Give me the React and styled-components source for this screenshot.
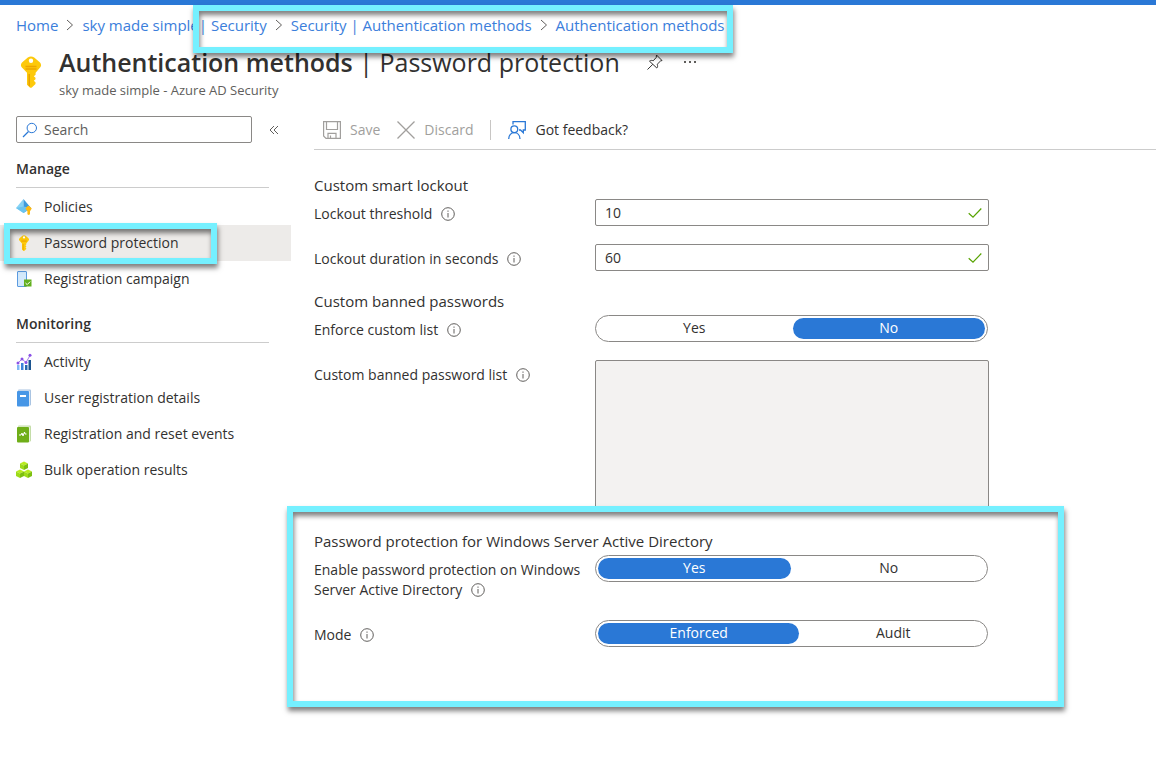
import { useState } from "react";
import styled, { createGlobalStyle, css } from "styled-components";

const c = {
  blue: "#2a78d6",
  link: "#3b7edb",
  text: "#323130",
  muted: "#605e5c",
  disabled: "#a19f9d",
  border: "#8a8886",
  line: "#cccccc",
  mark: "#75f0ff",
};

const manage = [
  { label: "Policies", icon: <PoliciesIcon /> },
  { label: "Password protection", icon: <KeyIcon size={16} />, active: true },
  { label: "Registration campaign", icon: <CampaignIcon /> },
];

const monitoring = [
  { label: "Activity", icon: <ActivityIcon /> },
  { label: "User registration details", icon: <BookIcon /> },
  { label: "Registration and reset events", icon: <BookIcon green /> },
  { label: "Bulk operation results", icon: <CubesIcon /> },
];

export default function App() {
  const [threshold, setThreshold] = useState("10");
  const [duration, setDuration] = useState("60");
  const [customList, setCustomList] = useState("No");
  const [enabled, setEnabled] = useState("Yes");
  const [mode, setMode] = useState("Enforced");

  return (
    <>
      <GlobalStyle />
      <TopBar />
      <Breadcrumb aria-label="Breadcrumb">
        <a href="#home">Home</a>
        <Chevron />
        <a href="#tenant">sky made simple</a>
        <Marked>
          <a href="#security">| Security</a>
          <Chevron />
          <a href="#security-methods">Security | Authentication methods</a>
          <Chevron />
          <a href="#methods">Authentication methods</a>
          <Highlight $inset="-9px -8px -17px -6px" />
        </Marked>
      </Breadcrumb>

      <Header>
        <KeyIcon size={32} />
        <div>
          <TitleRow>
            <Title>
              <strong>Authentication methods</strong> | Password protection
            </Title>
            <IconButton aria-label="Pin to dashboard">
              <PinIcon />
            </IconButton>
            <IconButton aria-label="More">
              <MoreIcon />
            </IconButton>
          </TitleRow>
          <Subtitle>sky made simple - Azure AD Security</Subtitle>
        </div>
      </Header>

      <Body>
        <Sidebar>
          <SearchRow>
            <SearchBox>
              <SearchIcon />
              <input type="search" placeholder="Search" aria-label="Search" />
            </SearchBox>
            <IconButton aria-label="Collapse menu">
              <CollapseIcon />
            </IconButton>
          </SearchRow>
          <NavGroup title="Manage" items={manage} />
          <NavGroup title="Monitoring" items={monitoring} />
        </Sidebar>

        <Main>
          <Toolbar>
            <Command disabled>
              <SaveIcon />
              Save
            </Command>
            <Command disabled>
              <DiscardIcon />
              Discard
            </Command>
            <Separator />
            <Command>
              <FeedbackIcon />
              Got feedback?
            </Command>
          </Toolbar>

          <Section>
            <SectionTitle>Custom smart lockout</SectionTitle>
            <Row>
              <Label htmlFor="threshold">
                Lockout threshold <InfoIcon />
              </Label>
              <Field>
                <input
                  id="threshold"
                  value={threshold}
                  onChange={(e) => setThreshold(e.target.value)}
                />
                <CheckIcon />
              </Field>
            </Row>
            <Row>
              <Label htmlFor="duration">
                Lockout duration in seconds <InfoIcon />
              </Label>
              <Field>
                <input
                  id="duration"
                  value={duration}
                  onChange={(e) => setDuration(e.target.value)}
                />
                <CheckIcon />
              </Field>
            </Row>
          </Section>

          <Section>
            <SectionTitle>Custom banned passwords</SectionTitle>
            <Row>
              <Label as="span" id="custom-list">
                Enforce custom list <InfoIcon />
              </Label>
              <Toggle
                labelledBy="custom-list"
                options={["Yes", "No"]}
                value={customList}
                onChange={setCustomList}
              />
            </Row>
            <Row>
              <Label htmlFor="banned">
                Custom banned password list <InfoIcon />
              </Label>
              <TextArea id="banned" disabled={customList === "No"} />
            </Row>
          </Section>

          <Section>
            <SectionTitle>Password protection for Windows Server Active Directory</SectionTitle>
            <Row>
              <Label as="span" id="enable">
                Enable password protection on Windows Server Active Directory <InfoIcon />
              </Label>
              <Toggle
                labelledBy="enable"
                options={["Yes", "No"]}
                value={enabled}
                onChange={setEnabled}
              />
            </Row>
            <Row>
              <Label as="span" id="mode">
                Mode <InfoIcon />
              </Label>
              <Toggle
                labelledBy="mode"
                options={["Enforced", "Audit"]}
                value={mode}
                onChange={setMode}
                columns="203fr 185fr"
              />
            </Row>
            <Highlight $inset="-25px -75px -60px -27px" />
          </Section>
        </Main>
      </Body>
    </>
  );
}

function NavGroup({ title, items }) {
  return (
    <Group>
      <GroupTitle>{title}</GroupTitle>
      <NavList>
        {items.map(({ label, icon, active }) => (
          <li key={label}>
            <NavLink href="#item" $active={active} aria-current={active ? "page" : undefined}>
              {icon}
              {label}
              {active && <Highlight $inset="-2px 74px -3px 4px" />}
            </NavLink>
          </li>
        ))}
      </NavList>
    </Group>
  );
}

function Toggle({ options, value, onChange, labelledBy, columns = "1fr 1fr" }) {
  return (
    <ToggleBox role="radiogroup" aria-labelledby={labelledBy} $columns={columns}>
      {options.map((option) => (
        <Option key={option}>
          <input
            type="radio"
            name={labelledBy}
            checked={value === option}
            onChange={() => onChange(option)}
          />
          <span>{option}</span>
        </Option>
      ))}
    </ToggleBox>
  );
}

/* icons */

function Chevron() {
  return (
    <svg width="8" height="12" viewBox="0 0 8 12" fill="none" stroke="#605e5c" aria-hidden="true">
      <path d="M1 1l5.5 5L1 11" />
    </svg>
  );
}

function KeyIcon({ size }) {
  return (
    <svg width={size} height={size} viewBox="0 0 32 32" aria-hidden="true">
      <path
        d="M12.800 1.400Q16-.6 19.200 1.400L25 6.600Q27 9 25.300 11.200L20.600 16.800V18.800L18.800 20.300L20.500 21.800V23.300L18.800 24.800L20.500 26.300V28L16.800 31.500Q15.800 32.200 14.800 31.500L12 28.800V16.800L6.700 11.200Q5 9 7 6.600Z"
        fill="#fdc90b"
      />
      <path d="M13.500 18v11.500l1.500 1.300V18z" fill="#e8a200" />
      <path d="M10.500 10.500h11M10.500 13h11" stroke="#eda500" strokeWidth="1.400" />
      <circle cx="16" cy="4.800" r="2.200" fill="#fff" />
    </svg>
  );
}

function PinIcon() {
  return (
    <svg width="18" height="18" viewBox="0 0 18 18" fill="none" stroke="#323130" aria-hidden="true">
      <path d="M10.500 2l5.500 5.500-1.500.5-3.300 3.300c.7 1.600.5 2.700-.4 3.700L3.500 8.200c1.200-1 2.500-1 3.700-.4L10.200 4.500zM6.800 11.300L1.500 16.500" />
    </svg>
  );
}

function MoreIcon() {
  return (
    <svg width="16" height="18" viewBox="0 0 16 18" fill="#605e5c" aria-hidden="true">
      <rect x="2" y="8" width="2" height="2" />
      <rect x="7" y="8" width="2" height="2" />
      <rect x="12" y="8" width="2" height="2" />
    </svg>
  );
}

function SearchIcon() {
  return (
    <svg width="16" height="16" viewBox="0 0 16 16" fill="none" stroke="#2a78d6" aria-hidden="true">
      <circle cx="9.800" cy="6" r="4.700" />
      <path d="M6.500 9.500L1 15" strokeWidth="1.300" />
    </svg>
  );
}

function CollapseIcon() {
  return (
    <svg width="10" height="10" viewBox="0 0 10 10" fill="none" stroke="#605e5c" aria-hidden="true">
      <path d="M5 1L1 5l4 4M9 1L5 5l4 4" />
    </svg>
  );
}

function SaveIcon() {
  return (
    <svg width="18" height="18" viewBox="0 0 18 18" fill="none" stroke="currentColor" aria-hidden="true">
      <path d="M.6.600h16.800v16.800H3L.6 15zM3.500.600v7.900h11V.600M5 17.400v-5h8v5M7.500 14.500v3" strokeWidth="1.200" />
    </svg>
  );
}

function DiscardIcon() {
  return (
    <svg width="18" height="18" viewBox="0 0 18 18" stroke="currentColor" aria-hidden="true">
      <path d="M.5.500l17 17M17.500.500l-17 17" strokeWidth="1.300" />
    </svg>
  );
}

function FeedbackIcon() {
  return (
    <svg width="18" height="18" viewBox="0 0 18 18" fill="none" stroke="#2a78d6" strokeWidth="1.300" aria-hidden="true">
      <path d="M5 3.500V.700h12.300v8.300h-2v2.700L12.500 9H11" />
      <circle cx="6.300" cy="8.200" r="3.400" />
      <path d="M.7 18c0-4 2.500-6.300 5.600-6.300S12 14 12 18" />
    </svg>
  );
}

function InfoIcon() {
  return (
    <svg width="14" height="14" viewBox="0 0 14 14" fill="none" stroke="#605e5c" aria-hidden="true">
      <circle cx="7" cy="7" r="6.300" />
      <path d="M7 6v4.500M7 3.500v1.300" />
    </svg>
  );
}

function CheckIcon() {
  return (
    <svg width="14" height="12" viewBox="0 0 14 12" fill="none" stroke="#57a300" strokeWidth="1.200" aria-hidden="true">
      <path d="M.7 6.200L5 10.200 13.300 1.500" />
    </svg>
  );
}

function PoliciesIcon() {
  return (
    <svg width="16" height="16" viewBox="0 0 16 16" aria-hidden="true">
      <path d="M7.500 0L0 9l7.500 5z" fill="#86d3f5" />
      <path d="M7.500 0L15 9l-7.500 5z" fill="#3e9bdc" />
      <path d="M0 9l7.500-1.500L15 9l-7.500 5z" fill="#6cc4ee" />
      <path d="M11.800 7h1.400l2.600 2.400-1.800 2.800v3l-1.300.8-1.300-.8v-3L9.400 9.400z" fill="#fdb913" />
    </svg>
  );
}

function CampaignIcon() {
  return (
    <svg width="16" height="16" viewBox="0 0 16 16" aria-hidden="true">
      <rect x="1.500" y=".5" width="9" height="15" rx=".5" fill="#d3e9fb" stroke="#5b9be0" />
      <rect x="8" y="8.500" width="7.500" height="7" fill="#62b01e" />
      <path d="M9.500 12l1.700 1.600 3-3" fill="none" stroke="#fff" />
    </svg>
  );
}

function ActivityIcon() {
  return (
    <svg width="16" height="18" viewBox="0 0 16 18" aria-hidden="true">
      <path d="M1 12h2.500v5H1z" fill="#7fb8f5" />
      <path d="M5 10h2.500v7H5z" fill="#3c83d8" />
      <path d="M9 12h2.500v5H9z" fill="#2668b0" />
      <path d="M12.500 7H15v10h-2.500z" fill="#1c5590" />
      <path d="M2 10l4-4 4 3.500 4-7" fill="none" stroke="#a57ceb" />
      <g fill="#8a50e6">
        <circle cx="2" cy="10" r="1.500" />
        <circle cx="6" cy="6" r="1.500" />
        <circle cx="10" cy="9.500" r="1.500" />
        <circle cx="14" cy="2.300" r="1.500" />
      </g>
    </svg>
  );
}

function BookIcon({ green }) {
  return (
    <svg width="16" height="18" viewBox="0 0 16 18" aria-hidden="true">
      <rect x="2" y=".5" width="13" height="16" rx="1" fill={green ? "#c4dda8" : "#a9c4e2"} />
      <rect x="2" y="1.500" width="12" height="15" rx="1" fill={green ? "#e8f3da" : "#dbe8f6"} />
      <rect x="1" y="2" width="12" height="15.500" rx="1" fill={green ? "#6fae18" : "#4696e6"} />
      {green ? (
        <path d="M3 10h2l1-2 1 3 1.500-4L9 9h1.500" fill="none" stroke="#fff" />
      ) : (
        <path d="M4 6h6v2H4z" fill="#fff" />
      )}
    </svg>
  );
}

function CubesIcon() {
  return (
    <svg width="16" height="18" viewBox="0 0 16 18" aria-hidden="true">
      {["translate(4 0)", "translate(0 8)", "translate(8 8)"].map((place) => (
        <g key={place} transform={place}>
          <path d="M0 2.500L4 .5l4 2-4 2z" fill="#b8ec1e" />
          <path d="M0 2.500l4 2V9L0 7z" fill="#9ddb18" />
          <path d="M8 2.500l-4 2V9l4-2z" fill="#7dbf10" />
        </g>
      ))}
    </svg>
  );
}

/* styles */

const GlobalStyle = createGlobalStyle`
  * {
    box-sizing: border-box;
  }

  body {
    margin: 0;
    background: #fff;
    color: ${c.text};
    font: 14px/20px "Segoe UI", "Open Sans", "Noto Sans", sans-serif;
  }

  input,
  button,
  textarea {
    font: inherit;
    color: inherit;
  }

  svg {
    flex: none;
  }
`;

const TopBar = styled.div`
  height: 5px;
  background: ${c.blue};
`;

const Highlight = styled.span`
  position: absolute;
  inset: ${(props) => props.$inset};
  border: 6px solid ${c.mark};
  box-shadow: 1px 4px 5px rgba(0, 0, 0, 0.5), inset 1px 4px 5px rgba(0, 0, 0, 0.5);
  pointer-events: none;
  z-index: 1;
`;

const Breadcrumb = styled.nav`
  display: flex;
  align-items: center;
  padding: 9px 16px 0;
  font-size: 15px;
  line-height: 22px;
  white-space: nowrap;

  a {
    color: ${c.link};
    text-decoration: none;
  }

  svg {
    margin: 0 8px;
  }
`;

const Marked = styled.div`
  position: relative;
  display: flex;
  align-items: center;
`;

const Header = styled.header`
  display: flex;
  align-items: center;
  gap: 12px;
  padding: 8px 15px 0;
`;

const TitleRow = styled.div`
  display: flex;
  align-items: center;
  gap: 18px;
`;

const Title = styled.h1`
  margin: 0 8px 0 0;
  font-size: 25px;
  line-height: 36px;
  font-weight: 400;
  white-space: nowrap;

  strong {
    font-weight: 600;
  }
`;

const Subtitle = styled.p`
  margin: 1px 0 0;
  color: ${c.muted};
  font-size: 13px;
  line-height: 18px;
`;

const IconButton = styled.button`
  display: flex;
  padding: 0;
  border: 0;
  background: none;
`;

const Body = styled.div`
  display: grid;
  grid-template-columns: 291px 1fr;
  column-gap: 23px;
  padding-top: 17px;
`;

const Sidebar = styled.aside`
  min-width: 0;
`;

const SearchRow = styled.div`
  display: flex;
  align-items: center;
  gap: 17px;
  padding-left: 16px;
`;

const SearchBox = styled.label`
  display: flex;
  align-items: center;
  gap: 6px;
  width: 236px;
  height: 27px;
  padding: 0 5px;
  border: 1px solid ${c.border};
  border-radius: 2px;

  input {
    flex: 1;
    min-width: 0;
    padding: 0;
    border: 0;
    outline: 0;
    background: none;
  }

  input::placeholder {
    color: ${c.muted};
  }
`;

const Group = styled.section`
  padding-top: 16px;
`;

const GroupTitle = styled.h2`
  margin: 0 22px 0 16px;
  padding-bottom: 8px;
  border-bottom: 1px solid ${c.line};
  font-size: 14px;
  font-weight: 600;
`;

const NavList = styled.ul`
  margin: 0;
  padding: 1px 0;
  list-style: none;
`;

const NavLink = styled.a`
  position: relative;
  display: flex;
  align-items: center;
  gap: 12px;
  height: 36px;
  padding-left: 16px;
  color: inherit;
  text-decoration: none;
  ${(props) =>
    props.$active &&
    css`
      background: #edebe9;
    `}
`;

const Main = styled.main`
  min-width: 0;
  padding-bottom: 110px;
`;

const Toolbar = styled.div`
  display: flex;
  align-items: center;
  gap: 17px;
  height: 34px;
  padding: 0 9px 5px;
  border-bottom: 1px solid ${c.line};
`;

const Command = styled.button`
  display: flex;
  align-items: center;
  gap: 9px;
  padding: 0;
  border: 0;
  background: none;

  &:disabled {
    color: ${c.disabled};
  }
`;

const Separator = styled.span`
  width: 1px;
  height: 20px;
  background: #c8c6c4;
`;

const Section = styled.section`
  position: relative;
  width: 675px;
  max-width: 100%;
  margin-top: 25px;

  & + & {
    margin-top: 20px;
  }
`;

const SectionTitle = styled.h2`
  margin: 0 0 4px;
  font-size: 15px;
  line-height: 20px;
  font-weight: 400;
`;

const Row = styled.div`
  display: grid;
  grid-template-columns: 281px 1fr;
  align-items: start;

  & + & {
    margin-top: 18px;
  }
`;

const Label = styled.label`
  padding: 5px 12px 2px 0;

  svg {
    margin-left: 5px;
    vertical-align: -2px;
  }
`;

const Field = styled.div`
  display: flex;
  align-items: center;
  height: 27px;
  padding: 0 6px 0 9px;
  border: 1px solid ${c.border};
  border-radius: 2px;

  input {
    flex: 1;
    min-width: 0;
    padding: 0;
    border: 0;
    outline: 0;
    background: none;
  }
`;

const TextArea = styled.textarea`
  display: block;
  height: 151px;
  border: 1px solid ${c.border};
  border-radius: 2px;
  resize: none;

  &:disabled {
    background: #f3f2f1;
  }
`;

const ToggleBox = styled.div`
  display: grid;
  grid-template-columns: ${(props) => props.$columns};
  gap: 2px;
  height: 27px;
  margin-right: 1px;
  padding: 2px;
  border: 1px solid ${c.border};
  border-radius: 14px;
`;

const Option = styled.label`
  display: grid;
  cursor: pointer;

  input {
    appearance: none;
    margin: 0;
    grid-area: 1 / 1;
    border-radius: 11px;
  }

  input:checked {
    background: ${c.blue};
  }

  span {
    grid-area: 1 / 1;
    text-align: center;
  }

  input:checked + span {
    color: #fff;
  }
`;
